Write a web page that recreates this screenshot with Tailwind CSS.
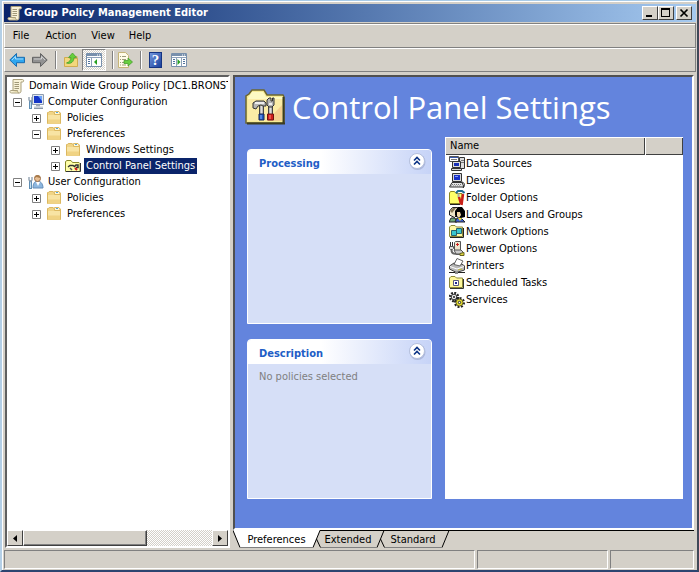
<!DOCTYPE html>
<html lang="en">
<head>
<meta charset="utf-8">
<title>Group Policy Management Editor</title>
<script src="https://cdn.jsdelivr.net/npm/@tailwindcss/browser@4"></script>
</head>
<body class="h-screen overflow-hidden bg-[#d4d0c8] font-['DejaVu_Sans_Condensed',sans-serif] text-[11px] leading-4 text-black">
<svg class="hidden" aria-hidden="true">
  <symbol id="scroll" viewBox="0 0 16 16">
    <path d="M4 1.500h9.500c1.500 0 1.500 2.500 0 2.500H12v9c0 1.500-.8 2-2 2H2.500C.5 15 .5 12.500 2 12.500h2z" fill="#f8f2d8" stroke="#aaa07c"/>
    <path d="M5.500 4.500H10M5.500 6.500H10M5.500 8.500H10M5.500 10.500H10" stroke="#a09878"/>
    <path d="M2 12.500h6.500c0 1.500.5 2.500 1.500 2.500" fill="#e4d9a8" stroke="#aaa07c"/>
  </symbol>
  <symbol id="folder" viewBox="0 0 16 16">
    <path d="M1.500 13.500v-11h1l.7-1h4l1 1.500h6.300v10.500z" fill="#f0d486" stroke="#dcb860"/>
    <path d="M8.500 2.500v-1h4.500l1 1.500v1.500H8.500z" fill="#fff8d8" stroke="#dcb860"/>
    <path d="M10 2.500h2" stroke="#59a5d8"/>
    <path d="M2 5h12v8.500H2z" fill="#f8e4a4"/><path d="M2 9.500h12v4H2z" fill="#f0d384"/>
  </symbol>
  <symbol id="tools" viewBox="0 0 40 36">
    <path d="M1 34V7l3-2 3-4h12l3 5h16l1 2v26z" fill="#f7eb94" stroke="#6b6530" stroke-width="1.500"/>
    <path d="M3 9l4-6h11l3 5h17v2H3z" fill="#fdfac4"/>
    <path d="M3 10h34v22H3z" fill="#fbeca6"/><path d="M22 32L37 16v16z" fill="#f4d090"/>
    <path d="M2 34.500h38M38.500 8v27" stroke="#3d3c20" stroke-width="2"/>
    <path d="M16.500 17v9M25.500 13v12" stroke="#444" stroke-width="5"/><path d="M16.500 17v9M25.500 13v12" stroke="#ddd" stroke-width="2.500"/>
    <path d="M8 19v-5l3-2h8l2 2v3h-3l-2-1-3 1-2 3z" fill="#b4b4b4" stroke="#333"/>
    <path d="M22 16v-5l2-2h2v3h1.500V9H29v7l-2 2h-3z" fill="#b4b4b4" stroke="#333"/>
    <path d="M10 14h9M24 15h3" stroke="#fff" stroke-width="1.500"/>
    <path d="M14 25h5v6h-5z" fill="#1c59c8" stroke="#182450"/><path d="M22.500 25h6v6h-6z" fill="#d21c1c" stroke="#701010"/>
    <path d="M16 26v4" stroke="#8eb4f4"/><path d="M25 26v4" stroke="#ff9080"/>
  </symbol>
  <symbol id="minitools" viewBox="0 0 16 16">
    <path d="M.5 13.500v-10l1.500-1h4l1.500 2h6.500l1 1v8z" fill="#ffffa8" stroke="#87872a"/>
    <path d="M1 13.500h14.500V5" fill="none" stroke="#333"/>
    <path d="M3 9l2-1.500h3l1.500 1L11 7h2v2.500h-2" stroke="#333" fill="none" stroke-width="1.500"/>
    <path d="M5 10l2 2" stroke="#555" stroke-width="1.500"/><path d="M10 10l2 2" stroke="#d01818" stroke-width="2"/>
  </symbol>
  <symbol id="computer" viewBox="0 0 16 16">
    <path d="M4.500.500h11v10h-11z" fill="#dfe7ef" stroke="#8e9cb0"/><path d="M6 2h8v7H6z" fill="#1436c8"/><path d="M10 2h4v5z" fill="#6da3f8"/>
    <path d="M8 11h4v1.500H8z" fill="#9eaab8"/><path d="M6 12.500h9v2H6z" fill="#c4ccd6"/><path d="M6 14.500h9" stroke="#8896a6"/>
    <path d="M2.500 7v8" stroke="#5f8eb4" stroke-width="3"/><path d="M2.500 8v6" stroke="#c6e0f0"/><path d="M1 3v3l1.500 1.500L4 6V3" fill="none" stroke="#8c9cac" stroke-width="1.300"/>
  </symbol>
  <symbol id="user" viewBox="0 0 16 16">
    <path d="M5 14c0-5 2-7 4.500-7S15 9 15 14z" fill="#8db7df" stroke="#658db8"/><path d="M8 8l2 4 2-4z" fill="#fff"/>
    <circle cx="9.500" cy="4.500" r="3" fill="#e8bf94" stroke="#9c704c"/><path d="M6.500 4c0-4 6-4 6 0-2 0-3-1-4-1z" fill="#a97c4c"/>
    <path d="M2.500 7v8" stroke="#5f8eb4" stroke-width="3"/><path d="M2.500 8v6" stroke="#c6e0f0"/><path d="M1 3v3l1.500 1.500L4 6V3" fill="none" stroke="#8c9cac" stroke-width="1.300"/>
  </symbol>
  <symbol id="arrow" viewBox="0 0 16 16">
    <path d="M.8 8L7.500 1.500v3.800h8v5.400h-8v3.800z" stroke-linejoin="round"/><path d="M3 8l3.500-3.500V7H14" fill="none" stroke="#fff" stroke-opacity=".55"/>
  </symbol>
  <symbol id="console" viewBox="0 0 16 14">
    <path d="M.5.500h15v13H.5z" fill="#fff" stroke="#7890ac"/><path d="M1 1h14v2H1z" fill="#7890ac"/><path d="M11 2h1M13 2h1" stroke="#fff"/><path d="M1 4.500h14M5.500 5v8" stroke="#8ea2ba"/>
    <path d="M2 6.500h2M2 8.500h2M2 10.500h2" stroke="#52749c"/>
  </symbol>
  <symbol id="chev" viewBox="0 0 18 18">
    <circle cx="9.500" cy="10" r="8" fill="#8b97bd" opacity=".5"/><circle cx="9" cy="9" r="7.500" fill="#fff" stroke="#b4bfdc"/>
    <path d="M6 8.500l3-3 3 3M6 12.500l3-3 3 3" fill="none" stroke="#0c3486" stroke-width="1.600"/>
  </symbol>
</svg>
<div class="flex h-full flex-col border-t border-l-2 border-r-2 border-b-2 border-t-[#a8cbe8] border-l-[#b4cfe6] border-r-[#404858] border-b-[#2c4470]">
<div class="flex min-h-0 flex-1 flex-col border-t border-l border-white px-px pt-[2px]">
  <header class="flex h-[18px] shrink-0 items-center bg-linear-to-r from-[#0a246a] to-[#a6caf0] pr-1 pl-[3px]">
    <svg class="size-4"><use href="#scroll"/></svg>
    <h1 class="ml-px flex-1 font-bold text-white">Group Policy Management Editor</h1>
    <button aria-label="Minimize" class="h-[14px] w-4 border border-t-white border-l-white border-r-[#404040] border-b-[#404040] bg-[#d4d0c8]"><svg class="h-3 w-[14px]" viewBox="0 0 14 12"><path d="M3 8h6v2H3z"/></svg></button>
    <button aria-label="Maximize" class="h-[14px] w-4 border border-t-white border-l-white border-r-[#404040] border-b-[#404040] bg-[#d4d0c8]"><svg class="h-3 w-[14px]" viewBox="0 0 14 12"><path d="M2 1h9v9H2zM3 3v6h7V3z" fill-rule="evenodd"/></svg></button>
    <button aria-label="Close" class="ml-[2px] h-[14px] w-4 border border-t-white border-l-white border-r-[#404040] border-b-[#404040] bg-[#d4d0c8]"><svg class="h-3 w-[14px]" viewBox="0 0 14 12"><path d="M3.500 2.500l7 7M10.500 2.500l-7 7" stroke="#000" stroke-width="1.700"/></svg></button>
  </header>
  <nav class="mt-px flex h-[25px] shrink-0 items-center border border-t-[#808080] border-l-white border-r-[#808080] border-b-[#808080] pt-px shadow-[inset_0_1px_#fff]">
    <button class="w-8 text-center">File</button><button class="w-12 text-center">Action</button><button class="w-9 text-center">View</button><button class="w-[38px] text-center">Help</button>
  </nav>
  <div role="toolbar" class="flex h-6 shrink-0 items-center border border-t-white border-l-white border-r-[#808080] border-b-[#808080] pl-1">
    <button aria-label="Back"><svg class="size-4" fill="#2fa7f0" stroke="#1b6db0"><use href="#arrow"/></svg></button>
    <button aria-label="Forward" class="ml-[7px]"><svg class="size-4 -scale-x-100" fill="#929292" stroke="#626262"><use href="#arrow"/></svg></button>
    <i class="ml-[7px] h-[18px] w-[2px] border-l border-l-[#808080] bg-white"></i>
    <button aria-label="Up one level" class="ml-[6px]"><svg class="size-4" viewBox="0 0 16 16"><path d="M1.500 14.500v-9h4l1 1h8v8z" fill="#f3d77c" stroke="#d0ac50"/><path d="M9 4.500h5v2H9z" fill="#fff" stroke="#d0ac50"/><path d="M3.500 11c3-1 4.500-3 4.500-5.500H5.500L9.500 1l4 4.500h-2.500c0 4-3 7-7.500 5.500z" fill="#66cf3c" stroke="#46a02c" stroke-width=".8"/></svg></button>
    <button aria-label="Show or hide console tree" aria-pressed="true" class="ml-[3px] flex h-[22px] w-6 items-center justify-center border border-t-[#808080] border-l-[#808080] border-r-white border-b-white bg-[repeating-conic-gradient(#fff_0_25%,#d4d0c8_0_50%)] bg-size-[2px_2px]"><svg class="h-[14px] w-4" viewBox="0 0 16 14"><use href="#console"/><path d="M11 6v6L8 9z" fill="#28a020"/></svg></button>
    <i class="ml-[6px] h-[18px] w-[2px] border-l border-l-[#808080] bg-white"></i>
    <button aria-label="Export list" class="ml-[3px]"><svg class="size-4" viewBox="0 0 16 16"><path d="M1.500.500h7l3 3v12h-10z" fill="#fffce8" stroke="#c6b478"/><path d="M3 4.500h1M5 4.500h4M3 7.500h1M5 7.500h4M3 10.500h1M5 10.500h3M3 13h1M5 13h4" stroke="#9d9b7c"/><path d="M7 8.500h4V6l4.500 4-4.500 4v-2.500H7z" fill="#68cf40" stroke="#46a02c" stroke-width=".8"/></svg></button>
    <i class="ml-[7px] h-[18px] w-[2px] border-l border-l-[#808080] bg-white"></i>
    <button aria-label="Help" class="ml-[7px] flex h-4 w-[13px] items-center justify-center border border-[#153482] bg-linear-to-br from-[#7396dc] to-[#1a3f9c] font-['Liberation_Serif',serif] text-[15px] font-bold text-white">?</button>
    <button aria-label="Show or hide action pane" class="ml-[9px]"><svg class="h-[14px] w-4" viewBox="0 0 16 14"><use href="#console"/><path d="M10.500 5v8" stroke="#8ea2ba"/><path d="M12 6.500h2M12 8.500h2M12 10.500h2" stroke="#52749c"/><path d="M6.500 6v6l3-3z" fill="#28a020"/></svg></button>
  </div>
  <main class="mt-[3px] flex min-h-0 flex-1 gap-[3px] pr-[2px] pl-px">
    <section class="flex w-1/3 max-w-[225px] flex-col border-2 border-t-[#606060] border-l-[#606060] border-r-white border-b-white bg-white">
      <ul role="tree" class="min-h-0 flex-1 overflow-hidden pt-px whitespace-nowrap">
        <li class="flex h-4 items-center pl-[2px]"><svg class="size-4 shrink-0"><use href="#scroll"/></svg><span class="ml-[2px] px-0.5">Domain Wide Group Policy [DC1.BRONSTU</span></li>
        <li class="flex h-4 items-center pl-[6px]"><button aria-label="Collapse" class="mr-[6px]"><svg class="size-[9px]"><path d="M.5.500h8v8h-8z" fill="#fff" stroke="#808080"/><path d="M2 4.500h5" stroke="#000"/></svg></button><svg class="size-4"><use href="#computer"/></svg><span class="ml-[2px] px-0.5">Computer Configuration</span></li>
        <li class="flex h-4 items-center pl-[25px]"><button aria-label="Expand" class="mr-[5px]"><svg class="size-[9px]"><path d="M.5.500h8v8h-8z" fill="#fff" stroke="#808080"/><path d="M2 4.500h5M4.500 2v5" stroke="#000"/></svg></button><svg class="size-4"><use href="#folder"/></svg><span class="ml-[3px] px-0.5">Policies</span></li>
        <li class="flex h-4 items-center pl-[25px]"><button aria-label="Collapse" class="mr-[5px]"><svg class="size-[9px]"><path d="M.5.500h8v8h-8z" fill="#fff" stroke="#808080"/><path d="M2 4.500h5" stroke="#000"/></svg></button><svg class="size-4"><use href="#folder"/></svg><span class="ml-[3px] px-0.5">Preferences</span></li>
        <li class="flex h-4 items-center pl-[44px]"><button aria-label="Expand" class="mr-[5px]"><svg class="size-[9px]"><path d="M.5.500h8v8h-8z" fill="#fff" stroke="#808080"/><path d="M2 4.500h5M4.500 2v5" stroke="#000"/></svg></button><svg class="size-4"><use href="#folder"/></svg><span class="ml-[3px] px-0.5">Windows Settings</span></li>
        <li class="flex h-4 items-center pl-[44px]"><button aria-label="Expand" class="mr-[5px]"><svg class="size-[9px]"><path d="M.5.500h8v8h-8z" fill="#fff" stroke="#808080"/><path d="M2 4.500h5M4.500 2v5" stroke="#000"/></svg></button><svg class="size-4"><use href="#minitools"/></svg><span class="ml-[3px] bg-[#0a246a] px-0.5 text-white">Control Panel Settings</span></li>
        <li class="flex h-4 items-center pl-[6px]"><button aria-label="Collapse" class="mr-[6px]"><svg class="size-[9px]"><path d="M.5.500h8v8h-8z" fill="#fff" stroke="#808080"/><path d="M2 4.500h5" stroke="#000"/></svg></button><svg class="size-4"><use href="#user"/></svg><span class="ml-[2px] px-0.5">User Configuration</span></li>
        <li class="flex h-4 items-center pl-[25px]"><button aria-label="Expand" class="mr-[5px]"><svg class="size-[9px]"><path d="M.5.500h8v8h-8z" fill="#fff" stroke="#808080"/><path d="M2 4.500h5M4.500 2v5" stroke="#000"/></svg></button><svg class="size-4"><use href="#folder"/></svg><span class="ml-[3px] px-0.5">Policies</span></li>
        <li class="flex h-4 items-center pl-[25px]"><button aria-label="Expand" class="mr-[5px]"><svg class="size-[9px]"><path d="M.5.500h8v8h-8z" fill="#fff" stroke="#808080"/><path d="M2 4.500h5M4.500 2v5" stroke="#000"/></svg></button><svg class="size-4"><use href="#folder"/></svg><span class="ml-[3px] px-0.5">Preferences</span></li>
      </ul>
      <div class="flex h-4 bg-[repeating-conic-gradient(#fff_0_25%,#d4d0c8_0_50%)] bg-size-[2px_2px]">
        <button aria-label="Scroll left" class="flex w-4 items-center justify-center border border-t-white border-l-white border-r-[#404040] border-b-[#404040] bg-[#d4d0c8]"><svg class="h-[7px] w-1"><path d="M4 0v7L0 3.500z"/></svg></button>
        <div class="w-[56%] border border-t-white border-l-white border-r-[#404040] border-b-[#404040] bg-[#d4d0c8] shadow-[inset_-1px_-1px_#808080]"></div>
        <button aria-label="Scroll right" class="ml-auto flex w-4 items-center justify-center border border-t-white border-l-white border-r-[#404040] border-b-[#404040] bg-[#d4d0c8]"><svg class="h-[7px] w-1"><path d="M0 0v7l4-3.500z"/></svg></button>
      </div>
    </section>
    <div class="flex min-w-0 flex-1 flex-col">
      <section class="flex min-h-0 flex-1 flex-col border-2 border-t-[#505050] border-l-[#505050] border-r-white border-b-white bg-[#6384dd] pr-[9px] pb-[29px] pl-3">
        <div class="flex h-[60px] shrink-0 items-center gap-[7px]">
          <svg class="-ml-[2px] h-9 w-10"><use href="#tools"/></svg>
          <h2 class="font-['Open_Sans',sans-serif] text-[31px] leading-10 whitespace-nowrap text-white">Control Panel Settings</h2>
        </div>
        <div class="grid min-h-0 flex-1 grid-cols-[185fr_238fr] gap-[13px]">
          <div class="mt-3 grid grid-rows-[175fr_160fr] gap-[15px]">
            <article class="flex flex-col overflow-hidden rounded-t-[4px] border border-white bg-[#d6dff7]">
              <header class="flex h-6 items-center bg-linear-to-r from-white from-40% to-[#c6d3f7] pr-[5px] pl-[11px]"><h3 class="flex-1 pt-[3px] font-bold text-[#215dc6]">Processing</h3><button aria-label="Collapse Processing" class="pb-[3px]"><svg class="size-[18px]"><use href="#chev"/></svg></button></header>
            </article>
            <article class="flex flex-col overflow-hidden rounded-t-[4px] border border-white bg-[#d6dff7]">
              <header class="flex h-6 items-center bg-linear-to-r from-white from-40% to-[#c6d3f7] pr-[5px] pl-[11px]"><h3 class="flex-1 pt-[3px] font-bold text-[#215dc6]">Description</h3><button aria-label="Collapse Description" class="pb-[3px]"><svg class="size-[18px]"><use href="#chev"/></svg></button></header>
              <p class="px-[11px] pt-[5px] text-[#808080]">No policies selected</p>
            </article>
          </div>
          <div class="bg-white">
            <table class="w-full border-collapse text-left">
              <thead><tr class="h-[18px] bg-[#d4d0c8]"><th class="w-[84%] p-0 pl-[5px] font-normal shadow-[inset_1px_1px_#fff,inset_-1px_-1px_#404040]">Name</th><th aria-label="Order" class="p-0 shadow-[inset_1px_1px_#fff,inset_-1px_-1px_#404040]"></th></tr></thead>
              <tbody>
                <tr class="h-[17px]"><td colspan="2" class="p-0 pl-1"><span class="flex items-center gap-px"><svg class="size-4" viewBox="0 0 16 16"><path d="M.5.500h9v5h-9z" fill="#fff" stroke="#555"/><path d="M1 1.500h8" stroke="#3858b0"/><path d="M2 3.500h6" stroke="#777"/><path d="M10.500 1.500h5v11h-5z" fill="#ddd" stroke="#333"/><path d="M12 4.500h3M12 6.500h3" stroke="#777"/><path d="M3.500 5.500h8v6h-8z" fill="#ddd" stroke="#333"/><path d="M5 7h5v3H5z" fill="#1830b8"/><path d="M2.500 12.500h10v2h-10z" fill="#ddd" stroke="#333"/></svg>Data Sources</span></td></tr>
                <tr class="h-[17px]"><td colspan="2" class="p-0 pl-1"><span class="flex items-center gap-px"><svg class="size-4" viewBox="0 0 16 16"><path d="M3.500.500h9v8h-9z" fill="#d8d8d8" stroke="#333"/><path d="M5 2h6v5H5z" fill="#1830c8"/><path d="M6 3.500h3" stroke="#8098ff"/><path d="M3 9.500h10l2 4.500H.5z" fill="#e4e4e4" stroke="#333"/><path d="M3 11.500h9M2 13h9" stroke="#777" stroke-dasharray="1 1"/><path d="M13 9c3 1 3 3 1 6" fill="none" stroke="#222"/></svg>Devices</span></td></tr>
                <tr class="h-[17px]"><td colspan="2" class="p-0 pl-1"><span class="flex items-center gap-px"><svg class="size-4" viewBox="0 0 16 16"><path d="M.5 13.500V3l1-1.500h4L7 3.500h6v10z" fill="#ffff68" stroke="#8c8820"/><path d="M1 14.500h10" stroke="#222"/><path d="M7 3L9 1h4l2.500 2" stroke="#1c6c90" stroke-width="2" fill="none"/><path d="M9.500 3.500v4" stroke="#aaa" stroke-width="2"/><path d="M10 7l2 7M14 4l-1.500 11" stroke="#c82018" stroke-width="2.500"/></svg>Folder Options</span></td></tr>
                <tr class="h-[17px]"><td colspan="2" class="p-0 pl-1"><span class="flex items-center gap-px"><svg class="size-4" viewBox="0 0 16 16"><path d="M.5 8V4l3-3.500h5v7l-3 3z" fill="#f0e6c8" stroke="#222"/><path d="M1 4l3-3h3L3 6z" fill="#887858"/><path d="M6 8V4l3-4h4l3 4v6l-4 1-5-1z" fill="#000"/><path d="M8 5h3l1 3-2 3-2-2z" fill="#f4d8a8"/><path d="M0 15l2-4h4l2 4z" fill="#70a878" stroke="#222"/><path d="M6 15l2-4h4l4 4z" fill="#3c60d8" stroke="#222"/><path d="M9 11l2 3 2-3z" fill="#f0df30"/></svg>Local Users and Groups</span></td></tr>
                <tr class="h-[17px]"><td colspan="2" class="p-0 pl-1"><span class="flex items-center gap-px"><svg class="size-4" viewBox="0 0 16 16"><path d="M.5 12.500V3L2 1.500h4L7.500 3h6v9.500z" fill="#fff8a4" stroke="#8c8838"/><path d="M1 13.500h13.500V4" fill="none" stroke="#222"/><path d="M7.500 4.500h5v5h-5zM2.500 6.500h5v5h-5z" fill="#38c8d0" stroke="#28646c"/></svg>Network Options</span></td></tr>
                <tr class="h-[17px]"><td colspan="2" class="p-0 pl-1"><span class="flex items-center gap-px"><svg class="size-4" viewBox="0 0 16 16"><path d="M5.500 1.500l1-1h5v9h-6z" fill="#eee4cc" stroke="#555"/><path d="M7 3.500h3M8.500 2v3" stroke="#d02020"/><path d="M1.500 1v4M3.500 1v4" stroke="#333"/><path d="M.5 5.500h4v2l-1 1h-2l-1-1z" fill="#ddd" stroke="#555"/><path d="M2.500 9c0 5 5 4 9 4" fill="none" stroke="#666" stroke-width="2"/><path d="M5 9h7l2 2v2H7z" fill="#ccc" stroke="#555"/><path d="M11 12.500l4-1v3h-4z" fill="#ded840" stroke="#666020"/></svg>Power Options</span></td></tr>
                <tr class="h-[17px]"><td colspan="2" class="p-0 pl-1"><span class="flex items-center gap-px"><svg class="size-4" viewBox="0 0 16 16"><path d="M.5 8L5 5l9 1.500 1.500 1.500v4l-8 2.500-7-3.500z" fill="#b8b8b8" stroke="#444"/><path d="M5 6.500l3-6L14 3l-3 5z" fill="#fff" stroke="#666"/><path d="M1 8.500l7 2.500 7-2.500" fill="none" stroke="#fff"/><path d="M9 12l4-1" stroke="#c0b838"/><path d="M0 14.500h6M9 14.500h7" stroke="#222"/><path d="M6 13.500h3v2.500H6z" fill="#888"/></svg>Printers</span></td></tr>
                <tr class="h-[17px]"><td colspan="2" class="p-0 pl-1"><span class="flex items-center gap-px"><svg class="size-4" viewBox="0 0 16 16"><path d="M.5 12.500V3L2 1.500h4L7.500 3h6v9.500z" fill="#fff89c" stroke="#8c8838"/><path d="M1 13.500h13.500V4" fill="none" stroke="#333"/><path d="M4.500 5.500h5v5h-5z" fill="#fff" stroke="#585880"/><path d="M6 7h2v2H6z" fill="#202890"/></svg>Scheduled Tasks</span></td></tr>
                <tr class="h-[17px]"><td colspan="2" class="p-0 pl-1"><span class="flex items-center gap-px"><svg class="size-4" viewBox="0 0 16 16"><circle cx="5" cy="5" r="4" fill="none" stroke="#222" stroke-width="2.500" stroke-dasharray="1.800 1.300"/><circle cx="5" cy="5" r="2.800" fill="#e8e8e8" stroke="#333"/><circle cx="5" cy="5" r="1" fill="#222"/><circle cx="10.500" cy="10.500" r="4.300" fill="none" stroke="#222" stroke-width="2.500" stroke-dasharray="1.900 1.400"/><circle cx="10.500" cy="10.500" r="3.500" fill="#e6e030" stroke="#666020"/><circle cx="10.500" cy="10.500" r="1.200" fill="#fff" stroke="#222"/></svg>Services</span></td></tr>
              </tbody>
            </table>
          </div>
        </div>
      </section>
      <div role="tablist" class="relative flex h-[18px] shrink-0 items-center border-t border-black">
        <svg class="absolute -top-px left-0 h-[18px] w-[220px]" aria-hidden="true"><path d="M0 0h87l-7 17H7z" fill="#fff"/><path d="M0 .5l7 17M87 .5l-7 17M83.500 9l4 8.500M151 .5l-7 17M147.500 9l4 8.500M216 .5l-7 17" fill="none" stroke="#000"/><path d="M7 17.500h73M88 17.500h56M152 17.500h57" stroke="#808080"/></svg>
        <button role="tab" aria-selected="true" class="relative w-[87px] text-center">Preferences</button>
        <button role="tab" class="relative w-[56px] text-center">Extended</button>
        <button role="tab" class="relative w-[74px] text-center">Standard</button>
      </div>
    </div>
  </main>
  <footer class="mt-[2px] mb-px grid h-[19px] shrink-0 grid-cols-[471fr_131fr_84fr] gap-[2px] pr-[2px]">
    <div class="border border-t-[#808080] border-l-[#808080] border-r-white border-b-white"></div>
    <div class="border border-t-[#808080] border-l-[#808080] border-r-white border-b-white"></div>
    <div class="border border-t-[#808080] border-l-[#808080] border-r-white border-b-white"></div>
  </footer>
</div>
</div>
</body>
</html>
